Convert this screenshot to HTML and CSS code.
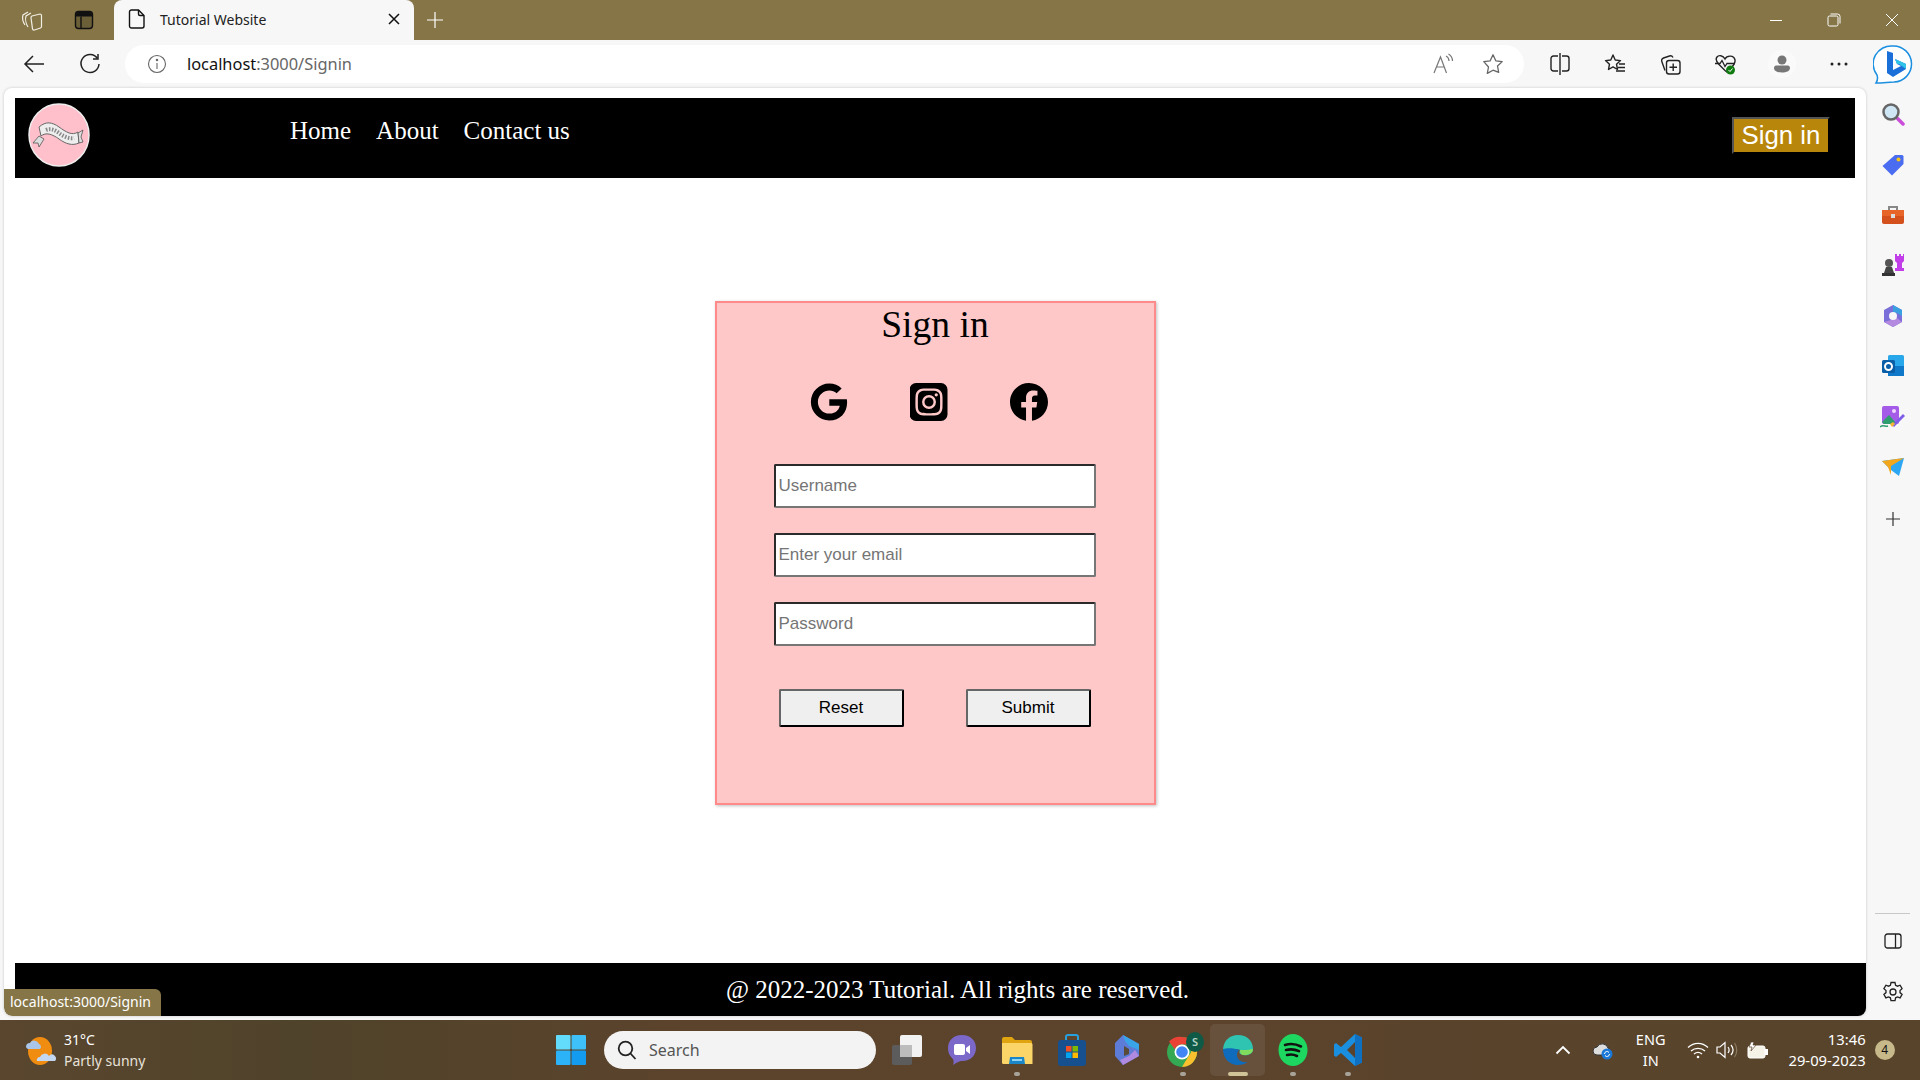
FILE: index.html
```html
<!DOCTYPE html>
<html lang="en">
<head>
    <meta charset="UTF-8">
    <meta name="viewport" content="width=device-width, initial-scale=1.0">
    <title>Tutorial Website</title>
    <link rel="stylesheet" href="styles.css">
</head>
<body>
    <!-- browser tab strip -->
    <div class="tabbar">
        <div class="strip-btn">
            <svg width="24" height="24" viewBox="0 0 24 24" fill="none" stroke="#f2efe4" stroke-width="1.2"><path d="M5 17c-2-3-3-7-2-10l5-3"/><path d="M8 19c-2-3-3-8-2-11l5-3"/><path d="M12 8l8-2c1 0 1.500 .5 1.500 1.500v11c0 .8-.4 1.300-1 1.500l-6 2c-1 .2-1.800-.3-2-1.200l-1.500-11c0-.8 0-1.500 1-1.800z"/></svg>
        </div>
        <div class="strip-btn">
            <svg width="20" height="20" viewBox="0 0 20 20"><rect x="1.500" y="1.500" width="17" height="17" rx="3" fill="#6b5f38" stroke="#111" stroke-width="1.400"/><path d="M2 6.500V4a2 2 0 0 1 2-2h12a2 2 0 0 1 2 2v2.500z" fill="#111"/><path d="M7 6.500V18" stroke="#111" stroke-width="1.400"/></svg>
        </div>
        <div class="tab">
            <svg width="18" height="20" viewBox="0 0 18 20" fill="none" stroke="#111" stroke-width="1.400"><path d="M3.500 1h7l5.500 5.500V17a2 2 0 0 1-2 2H3.500a2 2 0 0 1-2-2V3a2 2 0 0 1 2-2z"/><path d="M10.500 1v4a1.500 1.500 0 0 0 1.500 1.500h4"/></svg>
            <span class="tab-title">Tutorial Website</span>
            <svg class="tab-close" width="14" height="14" viewBox="0 0 14 14" stroke="#111" stroke-width="1.500"><path d="M2 2l10 10M12 2L2 12"/></svg>
        </div>
        <svg class="new-tab" width="18" height="18" viewBox="0 0 18 18" stroke="#fff" stroke-width="1.200"><path d="M9 1v16M1 9h16"/></svg>
        <div class="window-btns">
            <div class="win-btn"><svg width="14" height="14" viewBox="0 0 14 14" stroke="#fff"><path d="M1 7.500h12"/></svg></div>
            <div class="win-btn"><svg width="14" height="14" viewBox="0 0 14 14" fill="none" stroke="#fff"><rect x="1" y="3" width="10" height="10" rx="1.500"/><path d="M3.500 1h7a2.500 2.500 0 0 1 2.500 2.500v7"/></svg></div>
            <div class="win-btn"><svg width="14" height="14" viewBox="0 0 14 14" stroke="#fff"><path d="M1 1l12 12M13 1L1 13"/></svg></div>
        </div>
    </div>

    <!-- address bar row -->
    <div class="toolbar">
        <div class="nav-btn">
            <svg width="22" height="22" viewBox="0 0 22 22" fill="none" stroke="#222" stroke-width="1.500"><path d="M21 11H2M10 3l-8 8 8 8"/></svg>
        </div>
        <div class="nav-btn">
            <svg width="22" height="22" viewBox="0 0 22 22" fill="none" stroke="#222" stroke-width="1.500"><path d="M18.500 5.500A9 9 0 1 0 20 11"/><path d="M19 1v5h-5"/></svg>
        </div>
        <div class="address">
            <svg width="20" height="20" viewBox="0 0 20 20" fill="none" stroke="#666" stroke-width="1.100"><circle cx="10" cy="10" r="8.500"/><path d="M10 9v6"/><circle cx="10" cy="6" r=".7" fill="#666"/></svg>
            <span class="url"><span class="url-host">localhost</span>:3000/Signin</span>
            <div class="address-btns">
                <div class="address-btn">
                    <svg width="22" height="22" viewBox="0 0 22 22" fill="none" stroke="#777" stroke-width="1.200"><path d="M2 20L8.500 4l6 16M4.500 14h8"/><path d="M14 3c2 1 3 3 3 5M16.500 1c2.500 1.500 4 4 4 7"/></svg>
                </div>
                <div class="address-btn">
                    <svg width="22" height="22" viewBox="0 0 22 22" fill="none" stroke="#666" stroke-width="1.300" stroke-linejoin="round"><path d="M11 1.800l2.800 6 6.400.8-4.700 4.400 1.200 6.400L11 17.200l-5.700 3.200 1.200-6.400L1.800 8.600l6.400-.8z"/></svg>
                </div>
            </div>
        </div>
        <div class="tool-btn first">
            <svg width="20" height="22" viewBox="0 0 20 22" fill="none" stroke="#222" stroke-width="1.400"><path d="M8 3H3.500A2.500 2.500 0 0 0 1 5.500v10A2.500 2.500 0 0 0 3.500 18H8M12 3h4.500A2.500 2.500 0 0 1 19 5.500v10a2.500 2.500 0 0 1-2.500 2.500H12M10 0v22"/></svg>
        </div>
        <div class="tool-btn">
            <svg width="22" height="22" viewBox="0 0 22 22" fill="none" stroke="#222" stroke-width="1.400" stroke-linejoin="round"><path d="M9 2l2.200 5 5.300.6-4 3.600 1 5.300L9 13.900l-4.500 2.600 1-5.300-4-3.600L6.800 7z"/><path d="M15 11h6M14 14.500h7M12 18h9"/></svg>
        </div>
        <div class="tool-btn">
            <svg width="22" height="22" viewBox="0 0 22 22" fill="none" stroke="#222" stroke-width="1.400"><path d="M6 17.500L2.800 8.500c-.5-1.500.2-3 1.700-3.500l6-2c1.500-.5 2.800.2 3.500 1.500"/><rect x="7.500" y="7.500" width="13.500" height="13.500" rx="2.500"/><path d="M14.200 10.500v7.500M10.500 14.200H18"/></svg>
        </div>
        <div class="tool-btn">
            <svg width="22" height="22" viewBox="0 0 22 22"><path d="M11 6c2-4 9-4 10 1 .5 3-2 6-4 8l-4 4-2-1.500-6-6C2 8.500 1.500 6 3 4s6-2 8 2z" fill="none" stroke="#222" stroke-width="1.400"/><path d="M1 10.500h5l2-3 3 6 2-3h8" fill="none" stroke="#222" stroke-width="1.300"/><circle cx="16.500" cy="17" r="4.500" fill="#107c10"/><path d="M14.500 17l1.500 1.500 2.500-3" fill="none" stroke="#fff"/></svg>
        </div>
        <div class="tool-btn profile">
            <div class="profile-ring">
                <svg width="16" height="18" viewBox="0 0 16 18" fill="#777"><circle cx="8" cy="5" r="4.500"/><path d="M0 13c0-2 1.500-2.500 3-2.500h10c1.500 0 3 .5 3 2.500 0 3-3.500 4.500-8 4.500S0 16 0 13z"/></svg>
            </div>
        </div>
        <div class="tool-btn more">
            <svg width="18" height="4" viewBox="0 0 18 4" fill="#222"><circle cx="2" cy="2" r="1.500"/><circle cx="9" cy="2" r="1.500"/><circle cx="16" cy="2" r="1.500"/></svg>
        </div>
        <div class="tool-btn bing">
            <svg width="40" height="40" viewBox="0 0 40 40"><path d="M20 2a18 18 0 0 1 1 36c-5 0-11 1-18 1 2-3 2-5 1-8A18 18 0 0 1 20 2z" fill="#fff" stroke="#1b8fe0" stroke-width="1.500"/><path d="M14 7l6 2v17l8-4-4-2-2-5 11 5v5l-13 8-6-4z" fill="#1a6fd8"/><path d="M22 15l11 5v5l-7-5-2-0z" fill="#2fc4e8"/></svg>
        </div>
    </div>

    <div class="middle">
        <div class="page">
            <header class="site-header">
                <svg class="logo" width="62" height="64" viewBox="0 0 62 64">
                    <ellipse cx="31" cy="32" rx="30" ry="31" fill="#ffc0cb" stroke="#eee" stroke-width="1.500"/>
                    <path d="M11 24c7-6 13-5 20 0s13 9 19 5l1 11c-7 3-13 1-20-4s-13-7-18-3z" fill="#eee" stroke="#666" stroke-width="1"/>
                    <path d="M11 33l-6 7 5 0 1 4 5-8zM50 30l5-3-2 7 2 5-4 1z" fill="#ddd" stroke="#555" stroke-width=".8"/>
                    <path d="M18 27c5-2 9 0 13 3s10 6 15 5" fill="none" stroke="#888" stroke-width="4" stroke-dasharray="1.500 1.500"/>
                </svg>
                <nav class="site-nav">
                    <a href="#">Home</a>
                    <a href="#">About</a>
                    <a href="#">Contact us</a>
                </nav>
                <button class="signin-btn">Sign in</button>
            </header>

            <main class="content">
                <div class="card">
                    <h1>Sign in</h1>
                    <div class="socials">
                        <svg width="38" height="38" viewBox="0 0 488 512"><path d="M488 261.800C488 403.300 391.100 504 248 504 110.800 504 0 393.200 0 256S110.800 8 248 8c66.800 0 123 24.500 166.300 64.900l-67.500 64.900C258.500 52.600 94.300 116.600 94.300 256c0 86.500 69.100 156.600 153.700 156.600 98.200 0 135-70.400 140.800-106.900H248v-85.300h236.100c2.300 12.700 3.900 24.900 3.900 41.400z"/></svg>
                        <svg class="ig-icon" width="38" height="38" viewBox="0 32 448 448"><path d="M224,202.660A53.340,53.340,0,1,0,277.360,256,53.380,53.380,0,0,0,224,202.660Zm124.710-41a54,54,0,0,0-30.410-30.410c-21-8.290-71-6.430-94.300-6.430s-73.250-1.930-94.310,6.430a54,54,0,0,0-30.410,30.410c-8.280,21-6.430,71.050-6.430,94.330S91,329.260,99.320,350.330a54,54,0,0,0,30.410,30.410c21,8.290,71,6.430,94.310,6.430s73.240,1.930,94.300-6.430a54,54,0,0,0,30.410-30.410c8.350-21,6.430-71.050,6.430-94.330S357.100,182.740,348.750,161.670ZM224,338a82,82,0,1,1,82-82A81.900,81.900,0,0,1,224,338Zm85.380-148.300a19.140,19.140,0,1,1,19.130-19.140A19.100,19.100,0,0,1,309.420,189.740ZM400,32H48A48,48,0,0,0,0,80V432a48,48,0,0,0,48,48H400a48,48,0,0,0,48-48V80A48,48,0,0,0,400,32ZM382.880,322c-1.290,25.630-7.140,48.340-25.850,67s-41.400,24.630-67,25.850c-26.410,1.490-105.590,1.490-132,0-25.630-1.290-48.260-7.150-67-25.850s-24.630-41.420-25.850-67c-1.490-26.420-1.490-105.610,0-132,1.290-25.630,7.070-48.340,25.850-67s41.470-24.560,67-25.780c26.410-1.490,105.590-1.490,132,0,25.630,1.290,48.330,7.150,67,25.850s24.630,41.420,25.850,67.050C384.370,216.440,384.370,295.560,382.880,322Z"/></svg>
                        <svg width="38" height="38" viewBox="8 8 496 496"><path d="M504 256C504 119 393 8 256 8S8 119 8 256c0 123.780 90.690 226.380 209.250 245V327.690h-63V256h63v-54.640c0-62.150 37-96.480 93.670-96.480 27.140 0 55.520 4.840 55.520 4.840v61h-31.280c-30.800 0-40.410 19.120-40.410 38.730V256h68.780l-11 71.690h-57.780V501C413.310 482.380 504 379.780 504 256z"/></svg>
                    </div>
                    <form class="signin-form">
                        <input type="text" placeholder="Username">
                        <input type="email" placeholder="Enter your email">
                        <input type="password" placeholder="Password">
                        <div class="form-btns">
                            <button type="reset">Reset</button>
                            <button type="button">Submit</button>
                        </div>
                    </form>
                </div>
            </main>

            <footer class="site-footer">@ 2022-2023 Tutorial. All rights are reserved.</footer>
            <div class="status-tip">localhost:3000/Signin</div>
        </div>

        <!-- edge sidebar -->
        <aside class="sidebar">
            <div class="side-btn">
                <svg width="24" height="24" viewBox="0 0 24 24"><path d="M15 15l7 7" stroke="#c94fd8" stroke-width="3.500" stroke-linecap="round"/><circle cx="10" cy="10" r="7.500" fill="#cfe6f5" stroke="#666" stroke-width="2.500"/></svg>
            </div>
            <div class="side-btn">
                <svg width="24" height="24" viewBox="0 0 24 24"><path d="M14 2h7a1.500 1.500 0 0 1 1.500 1.500V11L11 22.500 1.500 13z" fill="#4a6cf0"/><circle cx="17.500" cy="6.500" r="2" fill="#f5c518"/></svg>
            </div>
            <div class="side-btn">
                <svg width="24" height="22" viewBox="0 0 24 22"><path d="M8 6V3h8v3" fill="none" stroke="#888" stroke-width="2"/><rect x="1" y="6" width="22" height="14" rx="2" fill="#d4501c"/><rect x="1" y="6" width="22" height="6" fill="#e8652a"/><rect x="10" y="10" width="4" height="4" fill="#ddd"/></svg>
            </div>
            <div class="side-btn">
                <svg width="24" height="24" viewBox="0 0 24 24"><path d="M14 1h2v2h2V1h2v2h2V1h1v7l-2 2v5h2v3h-9v-3h2v-5l-2-2z" fill="#c23ee8"/><circle cx="8" cy="10" r="4" fill="#555"/><path d="M5 14h6l2 6H3z" fill="#444"/><rect x="1" y="20" width="13" height="3" fill="#333"/></svg>
            </div>
            <div class="side-btn">
                <svg width="24" height="24" viewBox="0 0 24 24"><path d="M12 1l9 5v12l-9 5-9-5V6z" fill="#7a6fd8"/><path d="M12 1l9 5v6l-5-3-4-1z" fill="#3aa0e0"/><path d="M3 18l9 5 9-5-5-4-6 2z" fill="#b48ae0"/><circle cx="12" cy="12" r="4" fill="#f7f7f7"/></svg>
            </div>
            <div class="side-btn">
                <svg width="24" height="24" viewBox="0 0 24 24"><rect x="7" y="1" width="16" height="21" rx="1.500" fill="#28a8ea"/><path d="M7 12h16v10H7z" fill="#0f78c9"/><rect x="1" y="6" width="13" height="13" rx="1.500" fill="#0a5ea8"/><circle cx="7.500" cy="12.500" r="3.500" fill="none" stroke="#fff" stroke-width="2"/></svg>
            </div>
            <div class="side-btn">
                <svg width="26" height="24" viewBox="0 0 26 24"><rect x="2" y="1" width="17" height="18" rx="2" fill="#a45be8"/><path d="M2 17l7-7 8 9H4z" fill="#2f9e6e"/><circle cx="14" cy="6" r="2" fill="#f0d8ff"/><path d="M12 20l11-11 2 2-11 11z" fill="#7c5ce8"/><path d="M10 19l3-2 2 2-3 3z" fill="#f2b632"/><path d="M0 22c3-3 5 0 8-1" fill="none" stroke="#2f9e6e" stroke-width="1.500"/></svg>
            </div>
            <div class="side-btn">
                <svg width="24" height="20" viewBox="0 0 24 20"><path d="M1 4l22-3-5 18-8-6z" fill="#2ea7f2"/><path d="M1 4l22-3-13 8 0 9-3-8z" fill="#f2a71c"/></svg>
            </div>
            <div class="side-btn add">
                <svg width="16" height="16" viewBox="0 0 16 16" stroke="#333" stroke-width="1.200"><path d="M8 1v14M1 8h14"/></svg>
            </div>
            <div class="side-bottom">
                <div class="side-line"></div>
                <div class="side-btn">
                    <svg width="18" height="16" viewBox="0 0 18 16" fill="none" stroke="#222" stroke-width="1.300"><rect x="1" y="1" width="16" height="14" rx="2.500"/><path d="M11.500 1v14"/></svg>
                </div>
                <div class="side-btn">
                    <svg width="22" height="22" viewBox="0 0 22 22" fill="none" stroke="#222" stroke-width="1.300"><path d="M9 1.500h4l.6 2.800 1.900.9 2.600-1 2 3.500-2.100 1.800v2.100l2.100 1.800-2 3.500-2.600-1-1.900.9-.6 2.800H9l-.6-2.800-1.900-.9-2.600 1-2-3.500 2.100-1.800V9.500L1.900 7.700l2-3.500 2.600 1 1.900-.9z"/><circle cx="11" cy="11" r="3"/></svg>
                </div>
            </div>
        </aside>
    </div>

    <!-- windows taskbar -->
    <div class="taskbar">
        <div class="weather">
            <svg width="34" height="34" viewBox="0 0 34 34"><ellipse cx="17" cy="18" rx="12" ry="14" fill="#f08c10"/><path d="M3 14a4 4 0 0 1 4-4 5 5 0 0 1 9 1 3 3 0 0 1 1 5H5a3 3 0 0 1-2-2z" fill="#a9c6ea"/><path d="M14 28a3 3 0 0 1 3-4 5 5 0 0 1 9-1 3.500 3.500 0 0 1 6 5z" fill="#c3d7f0"/></svg>
            <div class="weather-text">
                <div class="temp">31°C</div>
                <div class="cond">Partly sunny</div>
            </div>
        </div>
        <svg class="win-logo" width="30" height="30" viewBox="0 0 30 30"><rect width="14.500" height="14.500" rx="1" fill="#63dcfb"/><rect x="15.500" width="14.500" height="14.500" rx="1" fill="#3dc1f8"/><rect y="15.500" width="14.500" height="14.500" rx="1" fill="#2cb2f7"/><rect x="15.500" y="15.500" width="14.500" height="14.500" rx="1" fill="#139bf0"/></svg>
        <div class="search">
            <svg width="20" height="20" viewBox="0 0 20 20" fill="none" stroke="#222" stroke-width="1.800"><circle cx="8.500" cy="8.500" r="6.800"/><path d="M13.500 13.500l5 5.500"/></svg>
            <span>Search</span>
        </div>
        <div class="apps">
            <div class="app">
                <svg width="32" height="32" viewBox="0 0 32 32"><rect x="1" y="11" width="20" height="20" rx="2" fill="#5c5c5c"/><rect x="9" y="1" width="22" height="22" rx="2" fill="#f2f2f2"/><rect x="9" y="11" width="12" height="12" fill="#bcbcbc"/></svg>
            </div>
            <div class="app">
                <svg width="30" height="32" viewBox="0 0 30 32"><path d="M15 1c9 0 14 6 14 13s-5 13-14 13c-3 0-4 1-9 4 1-3 1-5-1-7-3-3-4-6-4-10C1 7 6 1 15 1z" fill="#7b68c8"/><rect x="7" y="10" width="11" height="11" rx="2" fill="#fff"/><path d="M19 14l4-3v9l-4-3z" fill="#fff"/></svg>
            </div>
            <div class="app">
                <svg width="32" height="32" viewBox="0 0 32 32"><path d="M1 5a2 2 0 0 1 2-2h8l3 3h15a2 2 0 0 1 2 2v4H1z" fill="#e0a410"/><path d="M1 9h29a1.500 1.500 0 0 1 1.500 1.500V30H2.500A1.500 1.500 0 0 1 1 28.500z" fill="#fbd568"/><path d="M9 23h14l1 7H8z" fill="#1a86c8"/><rect x="11" y="25" width="10" height="2" fill="#8fd2f4"/></svg>
                <i class="app-dot"></i>
            </div>
            <div class="app">
                <svg width="30" height="32" viewBox="0 0 30 32"><path d="M9 8V3a2 2 0 0 1 2-2h8a2 2 0 0 1 2 2v5" fill="none" stroke="#27a0e0" stroke-width="2"/><rect x="1" y="6" width="28" height="26" rx="3" fill="#16508f"/><rect x="9" y="12" width="5.500" height="5.500" fill="#f25022"/><rect x="15.500" y="12" width="5.500" height="5.500" fill="#7fba00"/><rect x="9" y="18.500" width="5.500" height="5.500" fill="#00a4ef"/><rect x="15.500" y="18.500" width="5.500" height="5.500" fill="#ffb900"/></svg>
            </div>
            <div class="app">
                <svg width="28" height="32" viewBox="0 0 28 32"><path d="M10 1l16 9v12L10 31 2 22V9z" fill="#5c7cd8"/><path d="M10 1l16 9v6l-10-4-4-5z" fill="#3aa4e8"/><path d="M26 22L10 31l-3-5 9-4 6-6z" fill="#b08ae0"/><path d="M11 12l5 3v5l-5 2z" fill="#5a4a38"/></svg>
            </div>
            <div class="app chrome">
                <svg width="38" height="36" viewBox="0 0 38 36"><circle cx="16" cy="20" r="15" fill="#34a853"/><path d="M16 5a15 15 0 0 1 13 7.500H16a7.500 7.500 0 0 0-7 5L3 9.500A15 15 0 0 1 16 5z" fill="#ea4335"/><path d="M29 12.500A15 15 0 0 1 16 35l6.500-11A7.500 7.500 0 0 0 23 12.500z" fill="#fbc02d"/><circle cx="16" cy="20" r="7.500" fill="#fff"/><circle cx="16" cy="20" r="5.800" fill="#4285f4"/><ellipse cx="29" cy="10" rx="9" ry="10" fill="#0f5a46"/><text class="chrome-s" x="29" y="14" text-anchor="middle">S</text></svg>
                <i class="app-dot"></i>
            </div>
            <div class="app active">
                <svg width="32" height="32" viewBox="0 0 32 32"><path d="M1 15C2 6 8 1 16 1c9 0 15 6 15 14 0 5-5 7-10 6-4-1-4-3-3-5-6-2-13 0-17-1z" fill="#2fc4b2"/><path d="M1 15c0 9 6 16 15 16 4 0 7-1 10-3-6 1-11-2-11-7 0-3 1-5 3-5-6-2-13-2-17-1z" fill="#0f6cbd"/><path d="M31 15c0 4-4 6-9 6-3 0-4-2-4-5 4 0 9 0 13-1z" fill="#7fdc5c"/></svg>
                <i class="app-pill"></i>
            </div>
            <div class="app">
                <svg width="30" height="32" viewBox="0 0 30 32" fill="none"><ellipse cx="15" cy="16" rx="14.500" ry="16" fill="#1ed760"/><path d="M7 11c5-1.500 11-1 16 1.500M8 16c4.500-1 9-.7 13 1.200M9 21c3.500-.8 7-.5 10 1" stroke="#111" stroke-width="2.600" stroke-linecap="round"/></svg>
                <i class="app-dot"></i>
            </div>
            <div class="app">
                <svg width="30" height="34" viewBox="0 0 30 34"><path d="M22 1l7 3.500v25L22 33 8 20l-5 4-2-1.500V11.500L3 10l5 4z" fill="#1a8fe0"/><path d="M22 1v32l7-3.500v-25z" fill="#0f6fc0"/><path d="M22 9l-8 8 8 8z" fill="#5a432c"/></svg>
                <i class="app-dot"></i>
            </div>
        </div>
        <div class="tray">
            <div class="tray-chev">
                <svg width="16" height="10" viewBox="0 0 16 10" fill="none" stroke="#fff" stroke-width="1.800"><path d="M1.500 8.500L8 2l6.500 6.500"/></svg>
            </div>
            <div class="tray-cloud">
                <svg width="22" height="20" viewBox="0 0 22 20"><path d="M1 11a4 4 0 0 1 4-4 6 6 0 0 1 11 1 4 4 0 0 1 1 7H5a4 4 0 0 1-4-4z" fill="#ddd" stroke="#333"/><circle cx="15" cy="14" r="5.500" fill="#1a78d8"/><path d="M12.500 14a2.500 2.500 0 0 1 4.500-1.500M17.500 14a2.500 2.500 0 0 1-4.500 1.500" fill="none" stroke="#fff"/></svg>
            </div>
            <div class="tray-lang">ENG<br>IN</div>
            <div class="tray-wifi">
                <svg width="22" height="18" viewBox="0 0 22 18" fill="none" stroke="#fff" stroke-width="1.400"><path d="M1 6.500c6-5.500 14-5.500 20 0M4 10c4-3.500 10-3.500 14 0M7 13c2.500-2 5.500-2 8 0"/><circle cx="11" cy="16" r="1.300" fill="#fff" stroke="none"/></svg>
            </div>
            <div class="tray-vol">
                <svg width="22" height="18" viewBox="0 0 22 18" fill="none" stroke="#fff" stroke-width="1.200"><path d="M1 6h3l5-4.500v15L4 12H1z"/><path d="M12 6c1.500 2 1.500 4 0 6M15 4c2.500 3 2.500 7 0 10"/><path d="M18.500 2c3 4 3 10 0 14" stroke="#8a7a60"/></svg>
            </div>
            <div class="tray-batt">
                <svg width="22" height="18" viewBox="0 0 22 18"><rect x="1" y="5" width="17" height="12" rx="2" fill="#f5f2e8" stroke="#fff"/><rect x="18" y="8" width="3" height="6" fill="#fff"/><path d="M4 1L2 6h3l-1 4 5-6H6l1-3z" fill="#fff" stroke="#5a432c" stroke-width=".7"/></svg>
            </div>
            <div class="tray-clock">13:46<br>29-09-2023</div>
            <div class="tray-badge">4</div>
        </div>
    </div>
</body>
</html>
```

FILE: styles.css
```css
* {
    box-sizing: border-box;
}
body {
    margin: 0;
    width: 1920px;
    height: 1080px;
    overflow: hidden;
    display: flex;
    flex-direction: column;
    font-family: "Noto Sans", sans-serif;
    background-color: #f7f7f7;
}
svg {
    display: block;
    flex-shrink: 0;
}

/* tab strip */
.tabbar {
    height: 40px;
    display: flex;
    align-items: center;
    padding-left: 6px;
    background-color: #857547;
}
.strip-btn {
    width: 52px;
    display: flex;
    justify-content: center;
}
.tab {
    width: 300px;
    height: 40px;
    margin-left: 4px;
    padding: 0 13px 2px 14px;
    display: flex;
    align-items: center;
    background-color: #f7f7f7;
    border-radius: 8px 8px 0 0;
}
.tab-title {
    margin-left: 14px;
    font-size: 14px;
    color: #222;
}
.tab-close {
    margin-left: auto;
}
.new-tab {
    margin-left: 12px;
}
.window-btns {
    display: flex;
    margin-left: auto;
    margin-right: -1px;
}
.win-btn {
    width: 58px;
    display: flex;
    justify-content: center;
}

/* address row */
.toolbar {
    height: 48px;
    display: flex;
    align-items: center;
    padding-left: 6px;
    background-color: #f7f7f7;
}
.nav-btn {
    width: 56px;
    display: flex;
    justify-content: center;
}
.address {
    width: 1400px;
    height: 38px;
    margin-left: 7px;
    padding: 0 6px 0 22px;
    display: flex;
    align-items: center;
    background-color: #fff;
    border-radius: 19px;
}
.url {
    margin: 0 0 2px 20px;
    font-size: 16.400px;
    color: #666;
}
.url-host {
    color: #111;
}
.address-btns {
    display: flex;
    margin-left: auto;
}
.address-btn {
    width: 50px;
    display: flex;
    justify-content: center;
}
.tool-btn {
    width: 55px;
    display: flex;
    justify-content: center;
}
.tool-btn.first {
    margin-left: 8px;
}
.tool-btn.profile {
    width: 60px;
}
.tool-btn.more,
.tool-btn.bing {
    width: 54px;
}
.profile-ring {
    width: 28px;
    height: 28px;
    display: flex;
    align-items: center;
    justify-content: center;
    border-radius: 50%;
    background-color: #fafafa;
}

/* page + sidebar */
.middle {
    flex: 1;
    min-height: 0;
    display: flex;
    padding-left: 4px;
}
.page {
    position: relative;
    width: 1862px;
    height: 928px;
    padding: 10px 0 0 11px;
    display: flex;
    flex-direction: column;
    overflow: hidden;
    background-color: #fff;
    border-radius: 8px;
    box-shadow: 0 0 3px rgba(0, 0, 0, 0.2);
}
.site-header {
    width: 1840px;
    height: 80px;
    display: flex;
    background-color: #000;
}
.logo {
    margin: 5px 0 0 13px;
}
.site-nav {
    margin-left: 200px;
    padding-top: 19px;
    display: flex;
    gap: 25px;
    font-family: "Liberation Serif", serif;
    font-size: 25px;
}
.site-nav a {
    color: #fff;
    text-decoration: none;
}
.signin-btn {
    width: 98px;
    height: 37px;
    margin: 19px 25px 0 auto;
    padding: 0 0 2px;
    font-family: "Liberation Sans", sans-serif;
    font-size: 25.800px;
    line-height: 30px;
    color: #fff;
    background-color: #b8860b;
    border: 2px solid;
    border-color: #555 #000 #000 #555;
}
.content {
    flex: 1;
    display: flex;
    padding-top: 123px;
    padding-right: 11px;
    justify-content: center;
}
.card {
    width: 441px;
    height: 504px;
    background-color: #ffc8c8;
    border: 2px solid #ff8a8a;
    box-shadow: 1px 1px 3px rgba(0, 0, 0, 0.25);
}
.card h1 {
    margin: 0;
    text-align: center;
    font-family: "Liberation Serif", serif;
    font-size: 37.600px;
    font-weight: normal;
}
.socials {
    display: flex;
    gap: 62px;
    margin-top: 37px;
    padding-left: 93px;
}
.ig-icon {
    clip-path: inset(0 round 6.500px);
}
.signin-form {
    margin-top: 43px;
    padding-left: 57px;
    display: flex;
    flex-direction: column;
    gap: 25px;
}
.signin-form input {
    width: 322px;
    height: 44px;
    padding: 0 3px;
    font-family: "Liberation Sans", sans-serif;
    font-size: 17px;
    background-color: #fff;
    border: 2px solid;
    border-color: #2b2b2b #767676 #767676 #2b2b2b;
    border-radius: 2px;
}
.form-btns {
    display: flex;
    gap: 62px;
    margin-top: 18px;
    padding-left: 5px;
}
.form-btns button {
    width: 125px;
    height: 38px;
    padding: 0;
    font-family: "Liberation Sans", sans-serif;
    font-size: 17px;
    color: #000;
    background-color: #efefef;
    border: 2px solid;
    border-color: #666 #000 #000 #666;
    border-radius: 2px;
}
.site-footer {
    height: 53px;
    padding-left: 34px;
    display: flex;
    align-items: center;
    justify-content: center;
    font-family: "Liberation Serif", serif;
    font-size: 25px;
    color: #fff;
    background-color: #000;
}
.status-tip {
    position: absolute;
    left: 0;
    bottom: 0;
    width: 157px;
    height: 27px;
    padding-left: 6px;
    line-height: 26px;
    font-size: 14px;
    color: #fff;
    background-color: #857547;
    border-radius: 0 6px 0 8px;
}

/* edge sidebar */
.sidebar {
    width: 54px;
    padding-top: 1px;
    display: flex;
    flex-direction: column;
}
.side-btn {
    height: 50.400px;
    flex-shrink: 0;
    display: flex;
    align-items: center;
    justify-content: center;
}
.side-btn.add {
    margin-top: 2px;
}
.side-bottom {
    margin-top: auto;
    padding-bottom: 3px;
}
.side-line {
    height: 1px;
    margin: 0 10px 2px 9px;
    background-color: #c8c8c8;
}

/* taskbar */
.taskbar {
    height: 60px;
    display: flex;
    align-items: center;
    color: #fff;
    background: linear-gradient(90deg, #5a462f 0, #50432b 300px, #5c432c 700px, #5b432c 1300px, #57442b 100%);
}
.weather {
    width: 556px;
    padding-left: 23px;
    display: flex;
    align-items: center;
    gap: 7px;
}
.weather-text {
    font-size: 14px;
    line-height: 21px;
}
.cond {
    color: #e6e2da;
}
.search {
    width: 272px;
    height: 38px;
    margin-left: 18px;
    padding-left: 13px;
    display: flex;
    align-items: center;
    gap: 12px;
    font-size: 16px;
    color: #555;
    background-color: #f3f3f3;
    border-radius: 19px;
}
.apps {
    display: flex;
    margin-left: 3px;
}
.app {
    position: relative;
    width: 55.200px;
    height: 52px;
    display: flex;
    align-items: center;
    justify-content: center;
    border-radius: 5px;
}
.app.chrome {
    padding-left: 5px;
}
.app.active {
    background-color: rgba(255, 255, 255, 0.08);
}
.app-dot {
    position: absolute;
    left: 50%;
    bottom: 0;
    width: 6px;
    height: 4px;
    margin-left: -3px;
    border-radius: 2px;
    background-color: #a8a398;
}
.app-pill {
    position: absolute;
    left: 50%;
    bottom: 0;
    width: 20px;
    height: 4px;
    margin-left: -10px;
    border-radius: 2px;
    background-color: #cfc397;
}
.chrome-s {
    font-size: 11px;
    font-weight: 600;
    fill: #b8d4c8;
}
.tray {
    display: flex;
    align-items: center;
    margin-left: 172px;
}
.tray-chev {
    width: 30px;
    display: flex;
    justify-content: center;
}
.tray-cloud {
    width: 50px;
    display: flex;
    justify-content: center;
}
.tray-lang {
    width: 46px;
    text-align: center;
    font-size: 14.500px;
    line-height: 21px;
}
.tray-wifi {
    width: 28px;
    margin-left: 10px;
    display: flex;
    justify-content: center;
}
.tray-vol {
    width: 26px;
    margin-left: 2px;
    display: flex;
    justify-content: center;
}
.tray-batt {
    width: 28px;
    margin-left: 4px;
    display: flex;
    justify-content: center;
}
.tray-clock {
    width: 94px;
    text-align: right;
    font-size: 14.800px;
    line-height: 21px;
}
.tray-badge {
    width: 20px;
    height: 20px;
    margin-left: 9px;
    text-align: center;
    line-height: 20px;
    font-size: 12px;
    color: #111;
    background-color: #c7b98a;
    border-radius: 50%;
}
```
